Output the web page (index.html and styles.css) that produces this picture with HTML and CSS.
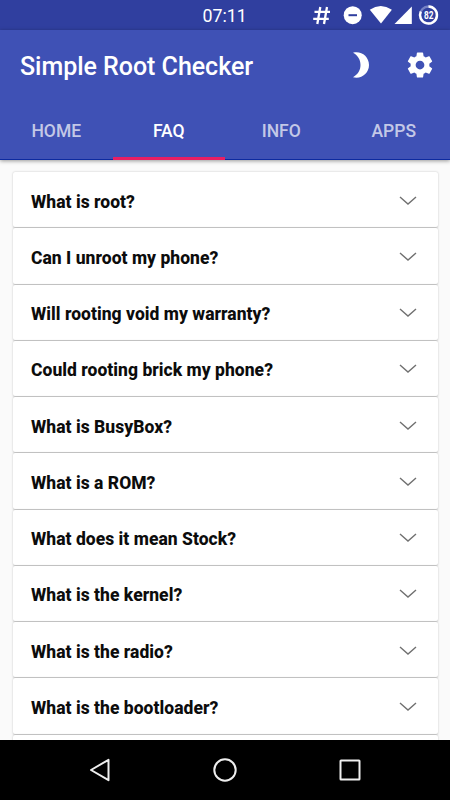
FILE: index.html
```html
<!DOCTYPE html>
<html lang="en">
<head>
<meta charset="utf-8">
<title>Simple Root Checker</title>
<link rel="stylesheet" href="styles.css">
</head>
<body>
<div class="statusbar">
  <span class="clock">07:11</span>
  <svg class="status-icons" width="130" height="30" viewBox="0 0 130 30" fill="#fff">
    <path d="M1.500 11.800H17M.2 18.800H15.800M7.300 7L4.300 24M14 7L11 24" fill="none" stroke="#fff" stroke-width="2.300"/>
    <circle cx="39.700" cy="15.200" r="9"/>
    <path d="M35.500 15.200h8.500" stroke="#303f9f" stroke-width="2"/>
    <path d="M56.800 9.700Q67.700 2.500 78.900 9.700L68 23.500Z"/>
    <path d="M81.500 24L98.800 6.500V24Z"/>
    <circle cx="115.500" cy="15" r="8.500" fill="none" stroke="#7681c4" stroke-width="2.400"/>
    <path d="M115.500 6.500A8.500 8.500 0 1 1 107.800 11.400" fill="none" stroke="#fff" stroke-width="2.400"/>
    <text class="battery" x="115.700" y="18.700" text-anchor="middle" textLength="9.500" lengthAdjust="spacingAndGlyphs">82</text>
  </svg>
</div>
<header class="appbar">
  <div class="toolbar">
    <h1>Simple Root Checker</h1>
    <svg class="moon" width="18" height="26" viewBox="0 0 18 26"><path d="M1 .8C9-1.500 17 4.500 17 13S9 27.500 1 25.200C6 22.500 8.500 18 8.500 13S6 3.500 1 .8Z" fill="#fff"/></svg>
    <svg class="gear" width="30" height="30" viewBox="0 0 24 24"><path fill="#fff" d="M19.430 12.980c.04-.32.07-.64.07-.98s-.03-.66-.07-.98l2.110-1.650c.19-.15.24-.42.12-.64l-2-3.460c-.12-.22-.39-.3-.61-.22l-2.490 1c-.52-.4-1.080-.73-1.690-.98l-.38-2.650C14.460 2.180 14.250 2 14 2h-4c-.25 0-.46.18-.49.42l-.38 2.650c-.61.25-1.170.59-1.690.98l-2.490-1c-.23-.09-.49 0-.61.22l-2 3.460c-.13.22-.07.49.12.64l2.110 1.650c-.04.32-.07.65-.07.98s.03.66.07.98l-2.110 1.650c-.19.15-.24.42-.12.64l2 3.460c.12.22.39.3.61.22l2.490-1c.52.4 1.080.73 1.690.98l.38 2.650c.03.24.24.42.49.42h4c.25 0 .46-.18.49-.42l.38-2.650c.61-.25 1.170-.59 1.690-.98l2.490 1c.23.09.49 0 .61-.22l2-3.460c.12-.22.07-.49-.12-.64l-2.110-1.650zM12 15.500c-1.930 0-3.500-1.570-3.500-3.500s1.570-3.500 3.500-3.500 3.500 1.570 3.500 3.500-1.570 3.500-3.500 3.500z"/></svg>
  </div>
  <nav class="tabs">
    <a>HOME</a>
    <a class="active">FAQ</a>
    <a>INFO</a>
    <a>APPS</a>
  </nav>
</header>
<main class="faq">
  <section class="card"><span>What is root?</span><svg class="chevron" viewBox="0 0 18 10"><path d="M1 1l8 7 8-7"/></svg></section>
  <section class="card"><span>Can I unroot my phone?</span><svg class="chevron" viewBox="0 0 18 10"><path d="M1 1l8 7 8-7"/></svg></section>
  <section class="card"><span>Will rooting void my warranty?</span><svg class="chevron" viewBox="0 0 18 10"><path d="M1 1l8 7 8-7"/></svg></section>
  <section class="card"><span>Could rooting brick my phone?</span><svg class="chevron" viewBox="0 0 18 10"><path d="M1 1l8 7 8-7"/></svg></section>
  <section class="card"><span>What is BusyBox?</span><svg class="chevron" viewBox="0 0 18 10"><path d="M1 1l8 7 8-7"/></svg></section>
  <section class="card"><span>What is a ROM?</span><svg class="chevron" viewBox="0 0 18 10"><path d="M1 1l8 7 8-7"/></svg></section>
  <section class="card"><span>What does it mean Stock?</span><svg class="chevron" viewBox="0 0 18 10"><path d="M1 1l8 7 8-7"/></svg></section>
  <section class="card"><span>What is the kernel?</span><svg class="chevron" viewBox="0 0 18 10"><path d="M1 1l8 7 8-7"/></svg></section>
  <section class="card"><span>What is the radio?</span><svg class="chevron" viewBox="0 0 18 10"><path d="M1 1l8 7 8-7"/></svg></section>
  <section class="card"><span>What is the bootloader?</span><svg class="chevron" viewBox="0 0 18 10"><path d="M1 1l8 7 8-7"/></svg></section>
  <section class="card"></section>
</main>
<footer class="navbar">
  <svg viewBox="0 0 26 26"><path d="M4 13L21.500 2.800V23.200Z"/></svg>
  <svg viewBox="0 0 26 26"><circle cx="13" cy="13" r="10.700"/></svg>
  <svg viewBox="0 0 26 26"><rect x="3.500" y="3.500" width="19" height="19" rx=".5"/></svg>
</footer>
</body>
</html>
```
FILE: styles.css
```css
* { box-sizing: border-box; }
body {
  margin: 0;
  width: 450px;
  height: 800px;
  overflow: hidden;
  display: flex;
  flex-direction: column;
  background: #fafafa;
  font-family: Roboto, "Liberation Sans", sans-serif;
}
.statusbar {
  flex: none;
  height: 30px;
  display: flex;
  align-items: center;
  justify-content: space-between;
  padding: 0 7px 0 202.500px;
  background: #303f9f;
}
.clock {
  color: #fff;
  font-size: 17.800px;
  font-weight: 450;
  line-height: 30px;
  padding-top: 1px;
}
.status-icons { display: block; }
.battery { font-size: 10px; font-weight: 700; }
.appbar {
  flex: none;
  position: relative;
  height: 130px;
  background: #3f51b5;
  border-bottom: 1px solid #0d2aa0;
  box-shadow: 0 1px 4px rgba(0, 0, 0, .4);
}
.toolbar {
  height: 70px;
  display: flex;
  align-items: center;
  padding: 0 15px 0 20px;
}
h1 {
  flex: 1;
  margin: 0;
  padding-top: 3px;
  color: #fff;
  font-size: 25px;
  font-weight: 480;
  letter-spacing: -.03px;
  white-space: nowrap;
}
.moon { margin-right: 35px; }
.tabs {
  height: 60px;
  display: grid;
  grid-template-columns: repeat(4, 1fr);
}
.tabs a {
  display: flex;
  align-items: center;
  justify-content: center;
  color: rgba(255, 255, 255, .7);
  font-size: 17.500px;
  font-weight: 480;
  border-bottom: 3px solid transparent;
  padding-top: 4px;
}
.tabs .active { color: #fff; font-weight: 500; border-color: #e91e63; }
.faq {
  flex: 1;
  min-height: 0;
  overflow: hidden;
  padding: 12px 12.500px 0;
}
.card {
  height: 55.250px;
  margin-bottom: 1px;
  display: flex;
  align-items: center;
  justify-content: space-between;
  padding: 4px 21px 0 18.500px;
  border-radius: 2px;
  background: #fff;
  box-shadow: 0 .5px 2px rgba(0, 0, 0, .24);
  color: #0c0c0c;
  font-size: 17.500px;
  font-weight: 850;
  letter-spacing: .03px;
}
.chevron {
  width: 18px;
  height: 10px;
  margin-top: -2px;
  fill: none;
  stroke: #707070;
  stroke-width: 1.400;
}
.navbar {
  flex: none;
  height: 60px;
  display: flex;
  align-items: center;
  justify-content: center;
  gap: 99px;
  background: #000;
}
.navbar svg {
  width: 26px;
  height: 26px;
  fill: none;
  stroke: #eee;
  stroke-width: 2;
  stroke-linejoin: round;
}
```
